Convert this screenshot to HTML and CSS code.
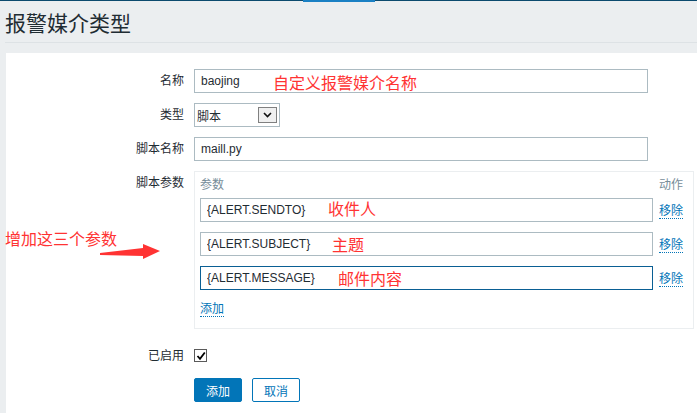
FILE: index.html
```html
<!DOCTYPE html>
<html lang="zh-CN">

<head>
    <meta charset="UTF-8">
    <meta name="viewport" content="width=device-width, initial-scale=1.0">
    <title>报警媒介类型</title>
    <link rel="stylesheet" href="styles.css">
</head>

<body>

    <div class="topbar"><span class="tab"></span></div>

    <div class="header">
        <h1>报警媒介类型</h1>
    </div>

    <div class="panel">
        <div class="note note-side">增加这三个参数</div>
        <svg class="arrow" width="64" height="24" viewBox="0 0 64 24">
            <polygon points="2,15 45,10 45,6 62,13 45,21 45,18 2,17" fill="#ff3333" />
        </svg>

        <div class="form">
            <label class="form-label">名称</label>
            <div class="field">
                <input class="text-input wide" type="text" value="baojing">
                <span class="note note-name">自定义报警媒介名称</span>
            </div>

            <label class="form-label">类型</label>
            <div class="field">
                <div class="select">
                    <span>脚本</span>
                    <span class="select-btn">
                        <svg width="9" height="6" viewBox="0 0 9 6">
                            <path d="M1 1 L4.5 4.5 L8 1" fill="none" stroke="#111" stroke-width="1.6" />
                        </svg>
                    </span>
                </div>
            </div>

            <label class="form-label">脚本名称</label>
            <div class="field">
                <input class="text-input wide" type="text" value="maill.py">
            </div>

            <label class="form-label">脚本参数</label>
            <div class="field">
                <div class="params">
                    <div class="params-head">
                        <span>参数</span>
                        <span>动作</span>
                    </div>
                    <div class="param-row">
                        <div class="param-field">
                            <input class="text-input" type="text" value="{ALERT.SENDTO}">
                            <span class="note note-p1">收件人</span>
                        </div>
                        <a class="link" href="#">移除</a>
                    </div>
                    <div class="param-row">
                        <div class="param-field">
                            <input class="text-input" type="text" value="{ALERT.SUBJECT}">
                            <span class="note note-p2">主题</span>
                        </div>
                        <a class="link" href="#">移除</a>
                    </div>
                    <div class="param-row">
                        <div class="param-field">
                            <input class="text-input focused" type="text" value="{ALERT.MESSAGE}">
                            <span class="note note-p3">邮件内容</span>
                        </div>
                        <a class="link" href="#">移除</a>
                    </div>
                    <div class="params-add">
                        <a class="link" href="#">添加</a>
                    </div>
                </div>
            </div>

            <label class="form-label enabled">已启用</label>
            <div class="field enabled">
                <span class="checkbox">
                    <svg width="10" height="10" viewBox="0 0 10 10">
                        <path d="M1.5 5 L4 7.8 L8.8 1.5" fill="none" stroke="#000" stroke-width="1.8" />
                    </svg>
                </span>
            </div>

            <div></div>
            <div class="buttons">
                <button class="btn btn-primary">添加</button>
                <button class="btn btn-alt">取消</button>
            </div>
        </div>
    </div>

</body>

</html>
```

FILE: styles.css
```css
body {
    margin: 0;
    padding: 0;
    background-color: #ebeef0;
    font-family: "Liberation Sans", Arial, "Noto Sans CJK SC", sans-serif;
    font-size: 12px;
    color: #1f2c33;
    overflow: hidden;
}

.topbar {
    height: 2px;
    background: linear-gradient(#0b4a6e 1px, transparent 1px);
}

.topbar .tab {
    display: block;
    width: 72px;
    height: 2px;
    margin-left: 303px;
    background-color: #1a80c4;
}

.header {
    margin-left: 5px;
    border-bottom: 1px solid #dde2e5;
}

.header h1 {
    margin: 0;
    padding-top: 4px;
    line-height: 36px;
    font-size: 21px;
    font-weight: normal;
    color: #1f2c33;
}

.panel {
    position: relative;
    box-sizing: border-box;
    margin: 10px 0 0 6px;
    padding-top: 16px;
    height: 360px;
    background-color: #ffffff;
}

.form {
    display: grid;
    grid-template-columns: 179px 1fr;
    column-gap: 9px;
    row-gap: 10px;
    align-items: start;
}

.form-label {
    text-align: right;
    line-height: 24px;
    padding-right: 1px;
}

.field {
    position: relative;
}

.text-input {
    box-sizing: border-box;
    height: 24px;
    width: 100%;
    padding: 0 6px;
    border: 1px solid #acbbc2;
    font-family: inherit;
    font-size: 12px;
    color: #1f2c33;
    background: #ffffff;
    outline: none;
}

.text-input.wide {
    width: 454px;
}

.text-input.focused {
    border-color: #0a5f94;
}

.select {
    box-sizing: border-box;
    width: 86px;
    height: 24px;
    border: 1px solid #acbbc2;
    display: flex;
    align-items: center;
    justify-content: space-between;
    padding: 0 2px 0 2px;
}

.select-btn {
    box-sizing: border-box;
    width: 19px;
    height: 16px;
    border: 1px solid #808080;
    background-color: #f0f0f0;
    display: flex;
    align-items: center;
    justify-content: center;
}

.params {
    box-sizing: border-box;
    width: 500px;
    border: 1px solid #ebeef0;
    padding: 5px 9px 10px 5px;
}

.params-head {
    display: flex;
    justify-content: space-between;
    line-height: 16px;
    color: #768d99;
    margin-bottom: 5px;
    padding-right: 1px;
}

.param-row {
    display: flex;
    align-items: center;
    gap: 6px;
    margin-bottom: 10px;
}

.param-field {
    position: relative;
    width: 453px;
}

.params-add {
    line-height: 18px;
    margin-top: 0;
}

.link {
    color: #0275b8;
    text-decoration: none;
    border-bottom: 1px dotted #0275b8;
}

.form-label.enabled,
.field.enabled {
    margin-top: 5px;
}

.checkbox {
    display: flex;
    align-items: center;
    justify-content: center;
    box-sizing: border-box;
    width: 13px;
    height: 13px;
    margin-top: 5px;
    border: 1px solid #5a5a5a;
    background: #ffffff;
}

.buttons {
    display: flex;
    gap: 10px;
}

.btn {
    box-sizing: border-box;
    height: 24px;
    width: 48px;
    border-radius: 2px;
    font-family: inherit;
    font-size: 12px;
    padding: 0;
}

.btn-primary {
    background-color: #0275b8;
    border: 1px solid #0275b8;
    color: #ffffff;
}

.btn-alt {
    background-color: #ffffff;
    border: 1px solid #0275b8;
    color: #0275b8;
}

.note {
    position: absolute;
    color: #ff3333;
    font-size: 16px;
    line-height: 18px;
    white-space: nowrap;
}

.note-name {
    left: 79px;
    top: 6px;
}

.note-p1 {
    left: 128px;
    top: 3px;
}

.note-p2 {
    left: 132px;
    top: 5px;
}

.note-p3 {
    left: 138px;
    top: 5px;
}

.note-side {
    left: -1px;
    top: 178px;
}

.arrow {
    position: absolute;
    left: 92px;
    top: 185px;
}
```
